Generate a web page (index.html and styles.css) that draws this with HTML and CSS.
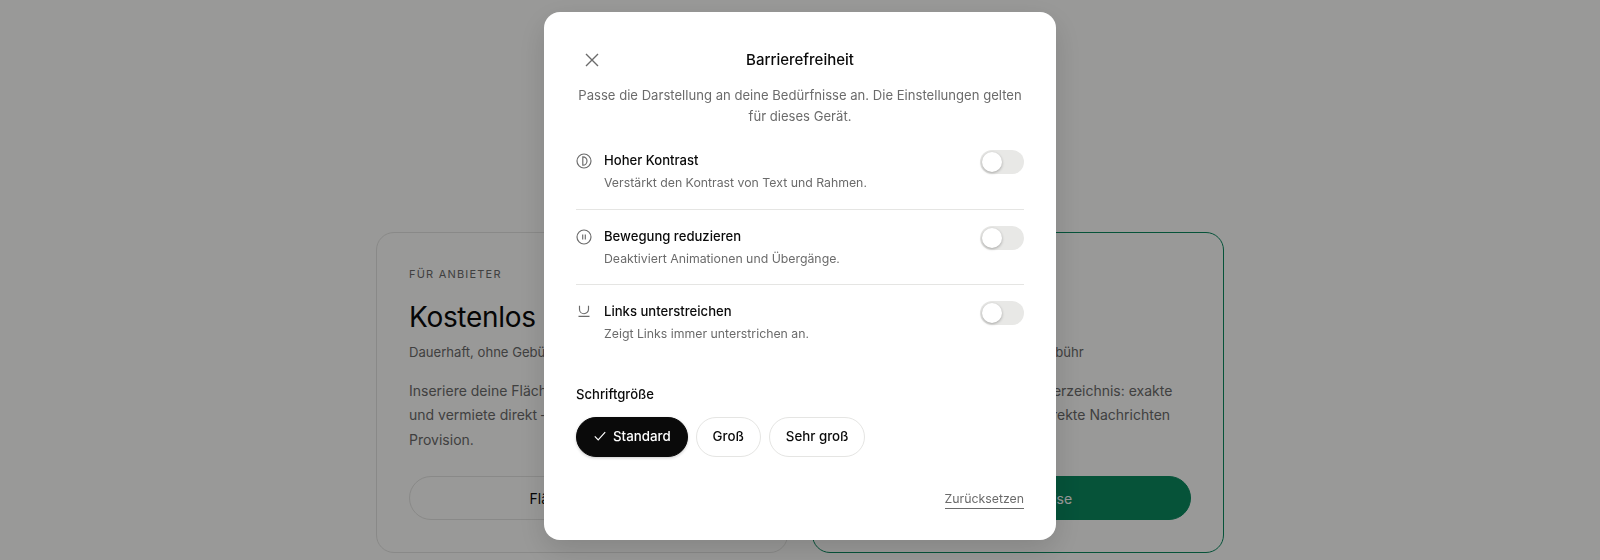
FILE: index.html
```html
<!DOCTYPE html>
<html lang="de">
<head>
<meta charset="utf-8">
<title>Barrierefreiheit</title>
<link rel="stylesheet" href="styles.css">
</head>
<body>
<main class="page">
  <section class="plans">
    <article class="plan">
      <p class="eyebrow">FÜR ANBIETER</p>
      <h2 class="price">Kostenlos</h2>
      <p class="note">Dauerhaft, ohne Gebühr</p>
      <p class="copy">Inseriere deine Fläche kostenlos<br>und vermiete direkt – ohne jede<br>Provision.</p>
      <a class="cta">Fläche anbieten</a>
    </article>
    <article class="plan plan-featured">
      <p class="eyebrow">FÜR MIETER</p>
      <h2 class="price">Premium</h2>
      <p class="note note-right">Einmalig ohne laufende Servicegebühr</p>
      <p class="copy copy-right">Voller Zugriff auf das Gesamt-Verzeichnis: exakte<br>Adressen,&nbsp; Kontaktdaten und direkte Nachrichten<br>an Anbieter.</p>
      <a class="cta cta-primary">Zugang &amp; Preise</a>
    </article>
  </section>
</main>
<div class="overlay">
  <div class="modal" role="dialog" aria-label="Barrierefreiheit">
    <header class="modal-head">
      <button class="close" aria-label="Schließen">
        <svg viewBox="0 0 16 16" width="16" height="16"><path d="M2 2l12 12M14 2L2 14"/></svg>
      </button>
      <h1 class="modal-title">Barrierefreiheit</h1>
    </header>
    <p class="intro">Passe die Darstellung an deine Bedürfnisse an. Die Einstellungen gelten für dieses Gerät.</p>
    <div class="row">
      <svg class="row-icon" viewBox="0 0 16 16" width="16" height="16"><circle cx="8" cy="8" r="7"/><path d="M6.8 3.8a4.2 4.2 0 0 1 0 8.4z"/></svg>
      <div class="row-text">
        <div class="row-title">Hoher Kontrast</div>
        <div class="row-desc">Verstärkt den Kontrast von Text und Rahmen.</div>
      </div>
      <span class="toggle"><span class="knob"></span></span>
    </div>
    <div class="row">
      <svg class="row-icon" viewBox="0 0 16 16" width="16" height="16"><circle cx="8" cy="8" r="7"/><path d="M6.7 5.5v5M9.3 5.5v5"/></svg>
      <div class="row-text">
        <div class="row-title">Bewegung reduzieren</div>
        <div class="row-desc">Deaktiviert Animationen und Übergänge.</div>
      </div>
      <span class="toggle"><span class="knob"></span></span>
    </div>
    <div class="row row-last">
      <svg class="row-icon" viewBox="0 0 16 16" width="16" height="16"><path d="M3.5 1.8v3.4a4.5 4.5 0 0 0 9 0V1.8M2.5 12.3h11"/></svg>
      <div class="row-text">
        <div class="row-title">Links unterstreichen</div>
        <div class="row-desc">Zeigt Links immer unterstrichen an.</div>
      </div>
      <span class="toggle"><span class="knob"></span></span>
    </div>
    <h2 class="size-label">Schriftgröße</h2>
    <div class="sizes">
      <button class="chip chip-on"><svg viewBox="0 0 14 14" width="14" height="14"><path d="M1.8 7.4l3.4 3.4 7-7.6"/></svg>Standard</button>
      <button class="chip">Groß</button>
      <button class="chip">Sehr groß</button>
    </div>
    <footer class="modal-foot"><a class="reset">Zurücksetzen</a></footer>
  </div>
</div>
</body>
</html>
```
FILE: styles.css
```css
* { box-sizing: border-box; }
html, body { margin: 0; height: 100%; overflow: hidden; }
body { background: #fffffd; font-family: "Inter", "Noto Sans", sans-serif; color: #0a0a0a; }
p, h1, h2 { margin: 0; font-weight: 400; }
.page { padding-top: 232px; display: flex; justify-content: center; }
.plans { display: grid; grid-template-columns: 412px 412px; gap: 24px; }
.plan { height: 321px; padding: 32px; border: 1px solid #e5e5e3; border-radius: 18px; display: flex; flex-direction: column; }
.plan-featured { border: 1.5px solid #0a8a60; }
.eyebrow { font-size: 11px; line-height: 18px; letter-spacing: 1.2px; color: #6b6b6b; }
.price { font-size: 28px; line-height: 36px; margin-top: 16px; letter-spacing: -0.3px; }
.note { font-size: 13.1px; line-height: 21px; color: #6b6b6b; margin-top: 7px; }
.copy { font-size: 14px; line-height: 24.4px; color: #6b6b6b; margin-top: 16px; }
.note-right, .copy-right { white-space: nowrap; }
.cta { margin-top: 24px; height: 44px; border: 1px solid #e5e5e3; border-radius: 22px; display: flex; align-items: center; justify-content: center; font-size: 14px; }
.cta-primary { background: #0a8a60; border-color: #0a8a60; color: #fff; }
.overlay { position: fixed; inset: 0; background: rgba(0,0,0,.4); display: flex; justify-content: center; align-items: flex-start; padding-top: 12px; }
.modal { width: 512px; height: 528px; padding: 32px; background: #fff; border-radius: 16px; box-shadow: 0 10px 30px rgba(0,0,0,.14); display: flex; flex-direction: column; }
.modal-head { position: relative; height: 32px; display: flex; align-items: center; justify-content: center; }
.close { position: absolute; left: 8px; top: 8px; padding: 0; width: 16px; height: 16px; border: 0; background: none; }
.close svg { display: block; fill: none; stroke: #6b6b6b; stroke-width: 1.4; }
.modal-title { font-size: 15px; line-height: 24px; font-weight: 500; }
.intro { margin: 9px 0 8px; font-size: 13.1px; line-height: 20.5px; text-align: center; color: #6b6b6b; }
.row { display: flex; align-items: flex-start; gap: 12px; padding: 16px 0; border-bottom: 1px solid #e5e5e3; height: 75px; }
.row:first-of-type { height: 76px; }
.row-last { border-bottom: 0; }
.row-icon { flex: none; margin-top: 3px; fill: none; stroke: #6b6b6b; stroke-width: 1.15; }
.row-text { flex: 1; }
.row-title { font-size: 13.1px; line-height: 21px; font-weight: 500; }
.row-desc { font-size: 12.3px; line-height: 20px; color: #6b6b6b; margin-top: 2px; }
.toggle { flex: none; width: 44px; height: 24px; background: #e8e8e6; border-radius: 12px; padding: 2px; }
.knob { display: block; width: 20px; height: 20px; border-radius: 50%; background: #fff; box-shadow: 0 1px 3px rgba(0,0,0,.3); }
.size-label { margin-top: 24px; font-size: 13.1px; line-height: 21px; font-weight: 500; }
.sizes { display: flex; gap: 8px; margin-top: 12px; }
.chip { height: 40px; padding: 0 16px 2px; border: 1px solid #e5e5e3; border-radius: 20px; background: #fff; font: 500 13.3px "Inter", sans-serif; color: #0a0a0a; display: flex; align-items: center; gap: 6px; }
.chip svg { fill: none; stroke: #fff; stroke-width: 1.2; }
.chip-on { background: #0a0a0a; border-color: #0a0a0a; color: #fff; box-shadow: 0 1px 3px rgba(0,0,0,.2); }
.modal-foot { margin-top: auto; display: flex; justify-content: flex-end; }
.reset { font-size: 12.3px; line-height: 18px; color: #6b6b6b; border-bottom: 1px solid #6b6b6b; margin-bottom: -1px; }
```
